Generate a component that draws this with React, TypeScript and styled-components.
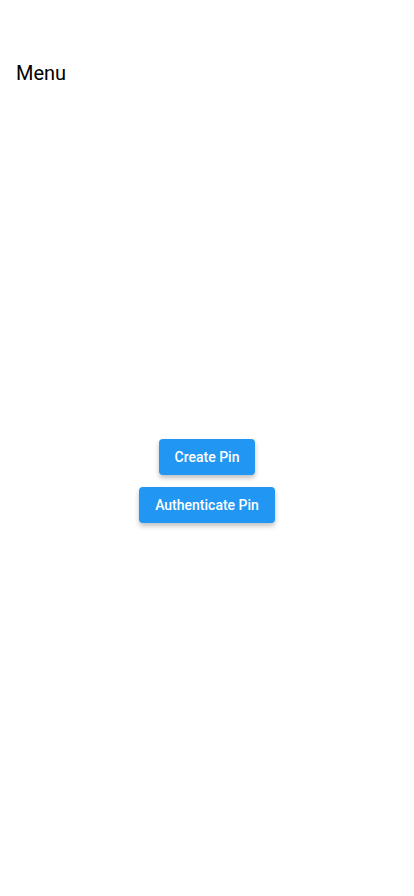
import styled, { createGlobalStyle } from 'styled-components'

const GlobalStyle = createGlobalStyle`
  html, body {
    margin: 0;
    padding: 0;
    background: #fff;
  }
  body {
    font-family: Roboto, "Liberation Sans", sans-serif;
  }
`

function App() {
  return (
    <Screen>
      <GlobalStyle />
      <Header>
        <Title>Menu</Title>
      </Header>
      <Body>
        <Button type="button">Create Pin</Button>
        <Button type="button">Authenticate Pin</Button>
      </Body>
    </Screen>
  )
}

const Screen = styled.div`
  display: flex;
  flex-direction: column;
  min-height: 896px;
  background: #fff;
`

const Header = styled.header`
  height: 100px;
  padding: 61px 16px 0;
  box-sizing: border-box;
`

const Title = styled.h1`
  margin: 0;
  font-size: 20px;
  line-height: 24px;
  font-weight: 400;
  color: #000;
`

const Body = styled.main`
  flex: 1;
  display: flex;
  flex-direction: column;
  align-items: center;
  justify-content: center;
  gap: 12px;
  padding-bottom: 35px;
`

const Button = styled.button`
  height: 36px;
  padding: 0 16px;
  border: none;
  border-radius: 4px;
  background: #2196f3;
  color: #fff;
  font-family: Roboto, "Liberation Sans", sans-serif;
  font-size: 14px;
  font-weight: 500;
  box-shadow: 0 3px 5px rgba(0, 0, 0, 0.25);
  cursor: pointer;
`

export default App
